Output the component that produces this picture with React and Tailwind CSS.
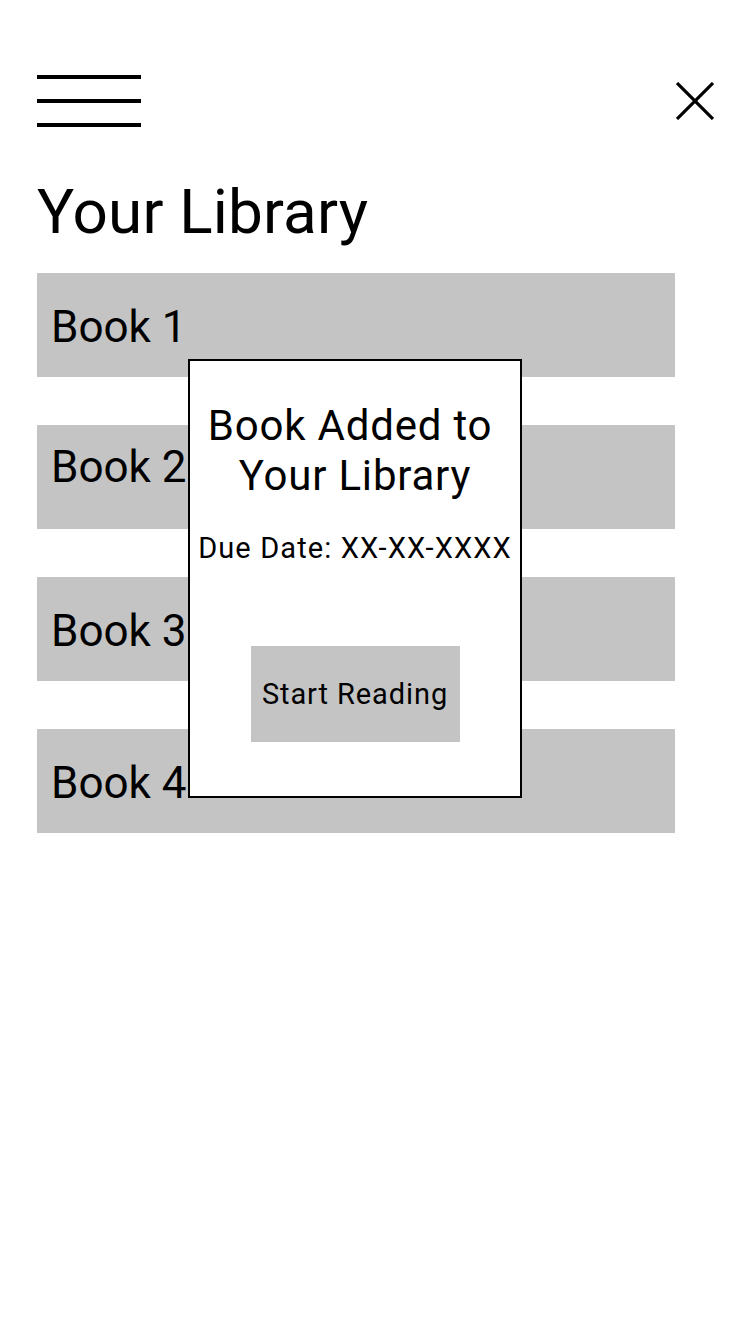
const books = [
  { title: 'Book 1', pad: 'pt-[4px]' },
  { title: 'Book 2', pad: 'pb-[20px]' },
  { title: 'Book 3', pad: 'pt-[4px]' },
  { title: 'Book 4', pad: 'pt-[4px]' },
]

const App = () => {
  return (
    <div className="min-h-[1334px] w-[750px] bg-white text-black font-['Roboto',sans-serif]">
      <div className="pl-[37px] pr-[36px] pt-[75px]">
        {/* header */}
        <div className="flex items-start justify-between">
          <div className="flex w-[104px] flex-col gap-[20px]">
            <div className="h-[4px] bg-black" />
            <div className="h-[4px] bg-black" />
            <div className="h-[4px] bg-black" />
          </div>
          <svg className="mt-[7px]" width="38" height="38" viewBox="0 0 38 38" fill="none">
            <path d="M1 1L37 37M37 1L1 37" stroke="black" strokeWidth="3.2" />
          </svg>
        </div>

        <h1 className="mt-[49px] text-[62px] leading-[72px] font-normal tracking-[0.2px]">Your Library</h1>

        <div className="relative mt-[25px] flex w-[638px] flex-col gap-[48px]">
          {books.map((book) => (
            <div key={book.title} className={`flex h-[104px] items-center bg-[#c4c4c4] pl-[14px] ${book.pad}`}>
              <span className="text-[44px] leading-[52px]">{book.title}</span>
            </div>
          ))}

          {/* popup */}
          <div className="absolute left-[151px] top-[86px] flex h-[439px] w-[334px] flex-col items-center border-2 border-black bg-white pt-[40px]">
            <p className="text-center text-[42px] leading-[50px] tracking-[0.8px]">
              <span className="inline-block pr-[10px]">Book Added to</span>
              <br />
              Your Library
            </p>
            <p className="mt-[30px] whitespace-nowrap text-[29px] leading-[34px] tracking-[1.1px]">Due Date: XX-XX-XXXX</p>
            <button className="mt-[81px] flex h-[96px] w-[209px] items-center justify-center bg-[#c4c4c4] text-[29px] leading-[34px] tracking-[0.9px]">
              Start Reading
            </button>
          </div>
        </div>
      </div>
    </div>
  )
}

export default App
